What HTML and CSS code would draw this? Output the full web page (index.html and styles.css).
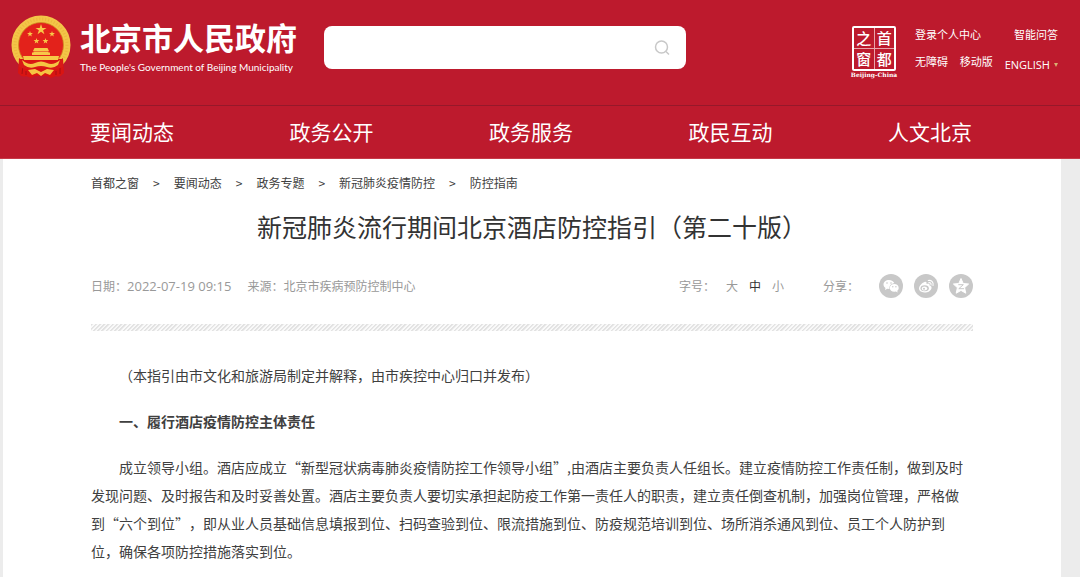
FILE: index.html
```html
<!DOCTYPE html>
<html lang="zh-CN">
<head>
    <meta charset="UTF-8">
    <meta name="viewport" content="width=device-width, initial-scale=1.0">
    <title>新冠肺炎流行期间北京酒店防控指引（第二十版）</title>
    <link rel="stylesheet" href="styles.css">
</head>
<body>

    <header class="main-header">
        <div class="header-top">
            <a class="logo" href="#">
                <svg class="emblem" viewBox="0 0 60 64" aria-hidden="true">
                    <circle cx="30" cy="30" r="26" fill="#e3221b" stroke="#f3c548" stroke-width="7"/>
                    <circle cx="30" cy="30" r="26" fill="none" stroke="#e3a52e" stroke-width="3" stroke-dasharray="1 2" opacity=".4"/>
                    <circle cx="30" cy="30" r="22.500" fill="none" stroke="#cf8f22" stroke-width=".8"/>
                    <path d="M8 44 L7 58 Q11 63 15 61 L20 63 L24 61 H36 L40 63 L45 61 Q49 63 53 58 L52 44 Z" fill="#d91512"/>
                    <path d="M12 50 L11 59 M49 50 L49 59 M15 56 V60 M45 56 V60" fill="none" stroke="#a80f12"/>
                    <g fill="#f7c948">
                        <path d="M30 9 L31.300 12.900 L35.500 12.900 L32.100 15.300 L33.400 19.200 L30 16.800 L26.600 19.200 L27.900 15.300 L24.500 12.900 L28.700 12.900 Z"/>
                        <path d="M0 -3 L.7 -1 L2.900 -.9 L1.200 .4 L1.800 2.400 L0 1.200 L-1.800 2.400 L-1.200 .4 L-2.900 -.9 L-.7 -1 Z" transform="translate(19 19)"/>
                        <path d="M0 -3 L.7 -1 L2.900 -.9 L1.200 .4 L1.800 2.400 L0 1.200 L-1.800 2.400 L-1.200 .4 L-2.900 -.9 L-.7 -1 Z" transform="translate(41 19)"/>
                        <path d="M0 -3 L.7 -1 L2.900 -.9 L1.200 .4 L1.800 2.400 L0 1.200 L-1.800 2.400 L-1.200 .4 L-2.900 -.9 L-.7 -1 Z" transform="translate(25.500 26)"/>
                        <path d="M0 -3 L.7 -1 L2.900 -.9 L1.200 .4 L1.800 2.400 L0 1.200 L-1.800 2.400 L-1.200 .4 L-2.900 -.9 L-.7 -1 Z" transform="translate(34.500 26)"/>
                        <path d="M23.500 33 H36.500 L38 36 H22 Z"/>
                        <path d="M22.500 36.500 H37.500 V37.500 H39 V40 H21 V37.500 H22.500 Z"/>
                        <path d="M12 41 H48 L47 45 H13 Z"/>
                    </g>
                    <path d="M8 43 Q14 49 24 46.500 Q30 44 36 46.500 Q46 49 52 43 L52 52 Q43 56 36 53 H24 Q17 56 8 52 Z" fill="#d91a17"/>
                    <path d="M11 45 Q18 51 24 48 Q30 45 36 48 Q42 51 49 45 L47 50 Q42 54 36 52 Q30 50 24 52 Q18 54 13 50 Z" fill="#f5c542"/>
                    <path d="M17 55 L24 54 L30 57 L36 54 L43 55 L39 60 L34 58 L30 61 L26 58 L21 60 Z" fill="#f5c542"/>
                </svg>
                <span class="logo-text">
                    <span class="logo-name">北京市人民政府</span>
                    <span class="logo-sub">The People's Government of Beijing Municipality</span>
                </span>
            </a>

            <form class="search" role="search">
                <input type="text" class="search-input" aria-label="搜索">
                <button type="button" class="search-btn" aria-label="搜索">
                    <svg viewBox="0 0 16 16" width="16" height="16" fill="none" stroke="#c8c8c8" stroke-width="1.500">
                        <circle cx="7.500" cy="7" r="6"/>
                        <path d="M12 11.500 L15 14.500"/>
                    </svg>
                </button>
            </form>

            <div class="header-right">
                <a class="seal" href="#">
                    <span class="seal-box">
                        <span>之</span><span>首</span>
                        <span>窗</span><span>都</span>
                    </span>
                    <span class="seal-name">Beijing-China</span>
                </a>
                <div class="quick-links">
                    <div class="quick-row">
                        <a href="#">登录个人中心</a>
                        <a href="#">智能问答</a>
                    </div>
                    <div class="quick-row">
                        <a href="#">无障碍</a>
                        <a href="#">移动版</a>
                        <a class="lang" href="#">ENGLISH <span class="arrow"></span></a>
                    </div>
                </div>
            </div>
        </div>

        <nav class="navbar">
            <a href="#">要闻动态</a>
            <a href="#">政务公开</a>
            <a href="#">政务服务</a>
            <a href="#">政民互动</a>
            <a href="#">人文北京</a>
        </nav>
    </header>

    <main class="container">
        <nav class="breadcrumb">
            <a href="#">首都之窗</a>
            <span>&gt;</span>
            <a href="#">要闻动态</a>
            <span>&gt;</span>
            <a href="#">政务专题</a>
            <span>&gt;</span>
            <a href="#">新冠肺炎疫情防控</a>
            <span>&gt;</span>
            <a href="#">防控指南</a>
        </nav>

        <h1>新冠肺炎流行期间北京酒店防控指引（第二十版）</h1>

        <div class="meta">
            <div class="meta-info">
                <span>日期：<time>2022-07-19 09:15</time></span>
                <span>来源：北京市疾病预防控制中心</span>
            </div>
            <div class="font-size">
                <span>字号：</span>
                <button type="button">大</button>
                <button type="button" class="active">中</button>
                <button type="button">小</button>
            </div>
            <div class="share">
                <span>分享：</span>
                <a href="#" aria-label="微信">
                    <svg viewBox="0 0 24 24" width="24" height="24">
                        <circle cx="12" cy="12" r="12" fill="#c8c8c8"/>
                        <path d="M10 6 C6.800 6 4.500 8 4.500 10.500 C4.500 12 5.300 13.200 6.500 14 L6 16 L8.300 14.800 L10.500 15 C10 11.500 12.500 9.300 15.400 9.300 C14.700 7.300 12.600 6 10 6 Z" fill="#fff"/>
                        <path d="M15.300 10 C12.800 10 10.800 11.700 10.800 13.900 C10.800 16.100 12.800 17.700 15.300 17.700 L16.900 17.500 L18.700 18.500 L18.200 16.800 C19.200 16.100 19.700 15 19.700 13.900 C19.700 11.700 17.800 10 15.300 10 Z" fill="#fff"/>
                        <g fill="#c8c8c8">
                            <circle cx="8" cy="9" r=".8"/>
                            <circle cx="12" cy="9" r=".8"/>
                            <circle cx="13.800" cy="12.700" r=".7"/>
                            <circle cx="16.900" cy="12.700" r=".7"/>
                        </g>
                    </svg>
                </a>
                <a href="#" aria-label="微博">
                    <svg viewBox="0 0 24 24" width="24" height="24">
                        <circle cx="12" cy="12" r="12" fill="#c8c8c8"/>
                        <path d="M10.500 8 C12.200 7.400 12.900 8.400 12.500 9.900 C14.500 9.300 16 9.700 15.600 11.500 C17.200 12 17.800 13 17.500 14.200 C16.800 17 13.500 18.700 10.300 18.500 C7 18.300 4.900 16.800 5 14.500 C5.200 12 7.800 9 10.500 8 Z" fill="#fff"/>
                        <ellipse cx="10.700" cy="14.300" rx="4.200" ry="3" fill="#c8c8c8"/>
                        <ellipse cx="10.500" cy="14.500" rx="2.700" ry="2.100" fill="#fff"/>
                        <circle cx="10" cy="14.800" r="1" fill="#c8c8c8"/>
                        <path d="M14.200 6.500 C17.500 5.800 20 8.400 19 11.500 M14.700 8.700 C16.400 8.400 17.400 9.600 17 11" fill="none" stroke="#fff" stroke-width="1.100" stroke-linecap="round"/>
                    </svg>
                </a>
                <a href="#" aria-label="QQ空间">
                    <svg viewBox="0 0 24 24" width="24" height="24">
                        <circle cx="12" cy="12" r="12" fill="#c8c8c8"/>
                        <path d="M12 4.500 L14.200 9.500 L19.600 10 L15.600 13.700 L16.800 19.200 L12 16.400 L7.200 19.200 L8.400 13.700 L4.400 10 L9.800 9.500 Z" fill="#fff" stroke="#fff" stroke-linejoin="round"/>
                        <path d="M9.300 10.700 H14.300 L9.800 14.700 H15" fill="none" stroke="#c8c8c8"/>
                    </svg>
                </a>
            </div>
        </div>

        <div class="stripe"></div>

        <article class="content">
            <p>（本指引由市文化和旅游局制定并解释，由市疾控中心归口并发布）</p>
            <p><strong>一、履行酒店疫情防控主体责任</strong></p>
            <p>成立领导小组。酒店应成立“新型冠状病毒肺炎疫情防控工作领导小组”,由酒店主要负责人任组长。建立疫情防控工作责任制，做到及时发现问题、及时报告和及时妥善处置。酒店主要负责人要切实承担起防疫工作第一责任人的职责，建立责任倒查机制，加强岗位管理，严格做到“六个到位”，即从业人员基础信息填报到位、扫码查验到位、限流措施到位、防疫规范培训到位、场所消杀通风到位、员工个人防护到位，确保各项防控措施落实到位。</p>
        </article>
    </main>

</body>
</html>
```
FILE: styles.css
```css
* {
    box-sizing: border-box;
}

body {
    margin: 0;
    font-family: "Noto Sans CJK SC", "Open Sans", sans-serif;
    font-size: 14px;
    color: #404040;
    background-color: #ececec;
}

a {
    color: inherit;
    text-decoration: none;
}

button {
    font: inherit;
    color: inherit;
    border: none;
    background: none;
    padding: 0;
    cursor: pointer;
}

.main-header {
    background-color: #bd1a2d;
    color: white;
    border-bottom: 1px solid #c63a48;
}

.header-top {
    display: flex;
    align-items: flex-start;
    height: 105px;
    padding: 15px 22px 0 11px;
}

.logo {
    display: flex;
    gap: 9px;
}

.emblem {
    width: 60px;
    height: 64px;
}

.logo-text {
    display: flex;
    flex-direction: column;
    width: 216px;
    padding-top: 4px;
    white-space: nowrap;
}

.logo-name {
    font-size: 31px;
    font-weight: bold;
    line-height: 36px;
}

.logo-sub {
    font-family: Lato, "Open Sans", sans-serif;
    font-size: 10px;
    line-height: 24px;
}

.search {
    display: flex;
    align-items: center;
    width: 362px;
    height: 43px;
    margin: 11px 0 0 28px;
    padding-right: 16px;
    background-color: white;
    border-radius: 8px;
}

.search-input {
    flex: 1;
    height: 100%;
    padding: 0 16px;
    border: none;
    outline: none;
    background: none;
    font: inherit;
}

.search-btn svg {
    display: block;
}

.header-right {
    display: flex;
    gap: 17px;
    margin-left: auto;
    padding-top: 11px;
}

.seal {
    display: flex;
    flex-direction: column;
    align-items: center;
    width: 48px;
}

.seal-box {
    display: grid;
    grid-template-columns: 1fr 1fr;
    grid-template-rows: 1fr 1fr;
    gap: 1px;
    width: 44px;
    height: 45px;
    border: 2px solid white;
    border-radius: 2px;
    background-color: #e9a3ab;
}

.seal-box span {
    background-color: #bd1a2d;
    font-size: 15px;
    font-weight: 500;
    line-height: 20px;
    text-align: center;
}

.seal-name {
    font-family: "DejaVu Serif", serif;
    font-size: 6px;
    font-weight: bold;
    line-height: 8px;
}

.quick-links {
    width: 143px;
    font-size: 11px;
    line-height: 16px;
}

.quick-row {
    display: flex;
    justify-content: space-between;
    margin-bottom: 11px;
}

.lang {
    display: flex;
    align-items: center;
    gap: 4px;
    padding-top: 4px;
    font-family: "Open Sans", sans-serif;
}

.arrow {
    border: 2px solid transparent;
    border-top: 4px solid #d8b070;
    border-bottom: none;
}

.navbar {
    display: flex;
    justify-content: space-between;
    padding: 0 108px 2px 90px;
    border-top: 1px solid #96182a;
    font-size: 21px;
    line-height: 50px;
}

.container {
    min-height: calc(100vh - 159px);
    margin: 0 19px 0 3px;
    padding: 13px 88px 0;
    background-color: white;
}

.breadcrumb {
    display: flex;
    gap: 14px;
    font-size: 12px;
    line-height: 22px;
}

h1 {
    margin: 12px 0 0;
    font-size: 25px;
    font-weight: normal;
    line-height: 40px;
    text-align: center;
    color: #333;
}

.meta {
    display: flex;
    align-items: center;
    height: 24px;
    margin-top: 28px;
    font-size: 12px;
    line-height: 16px;
    color: #999;
}

.meta-info {
    display: flex;
    gap: 16px;
    align-items: baseline;
    margin-right: auto;
}

.meta time {
    font-family: "Open Sans", sans-serif;
    font-size: 13px;
}

.font-size {
    display: flex;
    gap: 11px;
    margin-right: 39px;
}

.font-size .active {
    color: #333;
}

.share {
    display: flex;
    align-items: center;
    gap: 11px;
}

.share span {
    margin-right: 9px;
}

.share svg {
    display: block;
}

.stripe {
    height: 7px;
    margin-top: 26px;
    background: repeating-linear-gradient(135deg, #e2e2e2 0, #e2e2e2 1px, #fafafa 2px, #fafafa 3px);
}

.content {
    padding: 30px 4px 0 0;
    line-height: 28px;
    text-spacing-trim: space-all;
}

.content p {
    margin: 0 0 18px;
    text-indent: 2em;
}
```
